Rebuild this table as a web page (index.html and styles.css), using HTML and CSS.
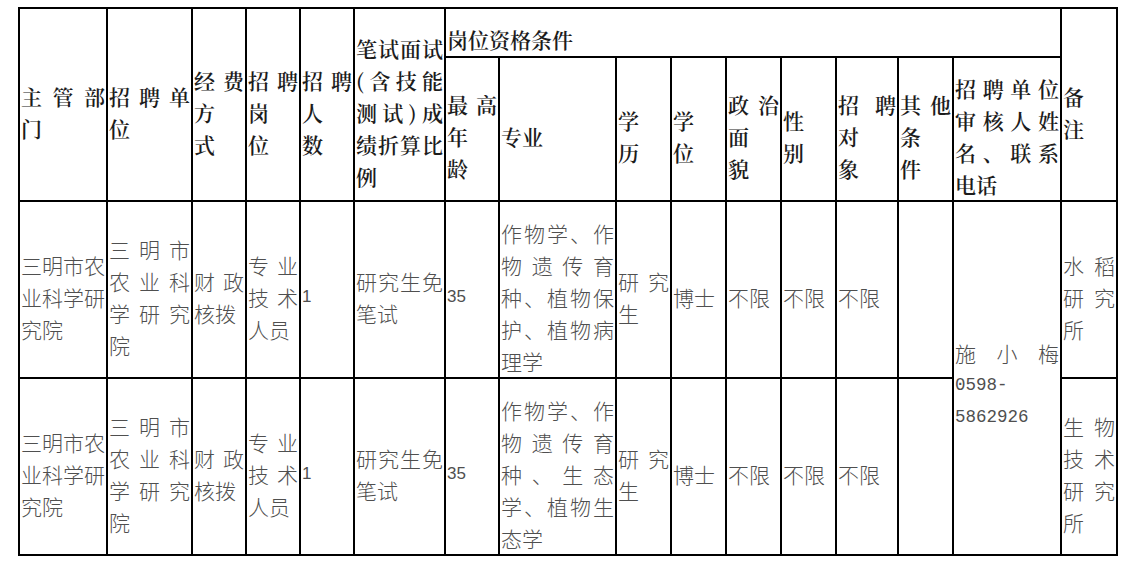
FILE: index.html
```html
<!DOCTYPE html>
<html lang="zh-CN">
<head>
<meta charset="utf-8">
<title>岗位表</title>
<link rel="stylesheet" href="styles.css">
</head>
<body>
<table class="grid">
  <colgroup>
    <col class="w88"><col class="w85"><col class="w54"><col class="w54"><col class="w54"><col class="w91">
    <col class="w54"><col class="w117"><col class="w55"><col class="w55"><col class="w55"><col class="w55">
    <col class="w62"><col class="w55"><col class="w108"><col class="w56">
  </colgroup>
  <thead>
    <tr class="h1">
      <th rowspan="2"><span class="ln j">主管部</span><span class="ln">门</span></th>
      <th rowspan="2"><span class="ln j">招聘单</span><span class="ln">位</span></th>
      <th rowspan="2"><span class="ln j">经费</span><span class="ln">方</span><span class="ln">式</span></th>
      <th rowspan="2"><span class="ln j">招聘</span><span class="ln">岗</span><span class="ln">位</span></th>
      <th rowspan="2"><span class="ln j">招聘</span><span class="ln">人</span><span class="ln">数</span></th>
      <th rowspan="2"><span class="ln j">笔试面试</span><span class="ln j">(含技能</span><span class="ln j">测试)成</span><span class="ln j">绩折算比</span><span class="ln">例</span></th>
      <th colspan="9" class="group">岗位资格条件</th>
      <th rowspan="2"><span class="ln">备</span><span class="ln">注</span></th>
    </tr>
    <tr class="h2">
      <th><span class="ln j">最高</span><span class="ln">年</span><span class="ln">龄</span></th>
      <th><span class="ln">专业</span></th>
      <th><span class="ln">学</span><span class="ln">历</span></th>
      <th><span class="ln">学</span><span class="ln">位</span></th>
      <th><span class="ln j">政治</span><span class="ln">面</span><span class="ln">貌</span></th>
      <th><span class="ln">性</span><span class="ln">别</span></th>
      <th><span class="ln j">招聘</span><span class="ln">对</span><span class="ln">象</span></th>
      <th><span class="ln j">其他</span><span class="ln">条</span><span class="ln">件</span></th>
      <th><span class="ln j">招聘单位</span><span class="ln j">审核人姓</span><span class="ln j">名、联系</span><span class="ln">电话</span></th>
    </tr>
  </thead>
  <tbody>
    <tr class="row">
      <td><span class="ln j">三明市农</span><span class="ln j">业科学研</span><span class="ln">究院</span></td>
      <td><span class="ln j">三明市</span><span class="ln j">农业科</span><span class="ln j">学研究</span><span class="ln">院</span></td>
      <td><span class="ln j">财政</span><span class="ln">核拨</span></td>
      <td><span class="ln j">专业</span><span class="ln j">技术</span><span class="ln">人员</span></td>
      <td class="num">1</td>
      <td><span class="ln j">研究生免</span><span class="ln">笔试</span></td>
      <td class="num">35</td>
      <td><span class="ln j">作物学、作</span><span class="ln j">物遗传育</span><span class="ln j">种、植物保</span><span class="ln j">护、植物病</span><span class="ln">理学</span></td>
      <td><span class="ln j">研究</span><span class="ln">生</span></td>
      <td>博士</td>
      <td>不限</td>
      <td>不限</td>
      <td>不限</td>
      <td></td>
      <td rowspan="2" class="contact"><span class="ln j">施小梅</span><span class="ln tel">0598-</span><span class="ln tel">5862926</span></td>
      <td><span class="ln j">水稻</span><span class="ln j">研究</span><span class="ln">所</span></td>
    </tr>
    <tr class="row">
      <td><span class="ln j">三明市农</span><span class="ln j">业科学研</span><span class="ln">究院</span></td>
      <td><span class="ln j">三明市</span><span class="ln j">农业科</span><span class="ln j">学研究</span><span class="ln">院</span></td>
      <td><span class="ln j">财政</span><span class="ln">核拨</span></td>
      <td><span class="ln j">专业</span><span class="ln j">技术</span><span class="ln">人员</span></td>
      <td class="num">1</td>
      <td><span class="ln j">研究生免</span><span class="ln">笔试</span></td>
      <td class="num">35</td>
      <td><span class="ln j">作物学、作</span><span class="ln j">物遗传育</span><span class="ln j">种、生态</span><span class="ln j">学、植物生</span><span class="ln">态学</span></td>
      <td><span class="ln j">研究</span><span class="ln">生</span></td>
      <td>博士</td>
      <td>不限</td>
      <td>不限</td>
      <td>不限</td>
      <td></td>
      <td><span class="ln j">生物</span><span class="ln j">技术</span><span class="ln j">研究</span><span class="ln">所</span></td>
    </tr>
  </tbody>
</table>
</body>
</html>
```

FILE: styles.css
```css
html, body {
  margin: 0;
  padding: 0;
  background: #ffffff;
}

.grid {
  border-collapse: collapse;
  table-layout: fixed;
  width: 1100px;
  margin: 7px 0 0 18px;
}

.w54 { width: 54px; }
.w55 { width: 55px; }
.w56 { width: 56px; }
.w62 { width: 62px; }
.w85 { width: 85px; }
.w88 { width: 88px; }
.w91 { width: 91px; }
.w108 { width: 108px; }
.w117 { width: 117px; }

.grid th,
.grid td {
  border: 2px solid #000;
  padding: 14px 1px 0 1px;
  vertical-align: middle;
  text-align: left;
  font-size: 21px;
  line-height: 32px;
  overflow: hidden;
  white-space: nowrap;
}

.grid th {
  font-family: "Noto Serif CJK SC", "Noto Sans CJK SC", serif;
  font-weight: 600;
  color: #1c1c1c;
}

.grid td {
  font-family: "Noto Sans CJK SC", sans-serif;
  font-weight: 300;
  color: #4f4f4f;
}

.grid th.group {
  padding-top: 13px;
  line-height: 30px;
}

.h1 { height: 49px; }
.h2 { height: 143px; }
.row { height: 177px; }

.ln {
  display: block;
}

.j {
  text-align: justify;
  text-align-last: justify;
}

.grid td.num {
  font-family: "Liberation Sans", Arial, sans-serif;
  font-size: 17px;
  font-weight: 400;
}

.tel {
  font-family: "Liberation Mono", monospace;
  font-size: 17.5px;
  letter-spacing: 0;
}
```
